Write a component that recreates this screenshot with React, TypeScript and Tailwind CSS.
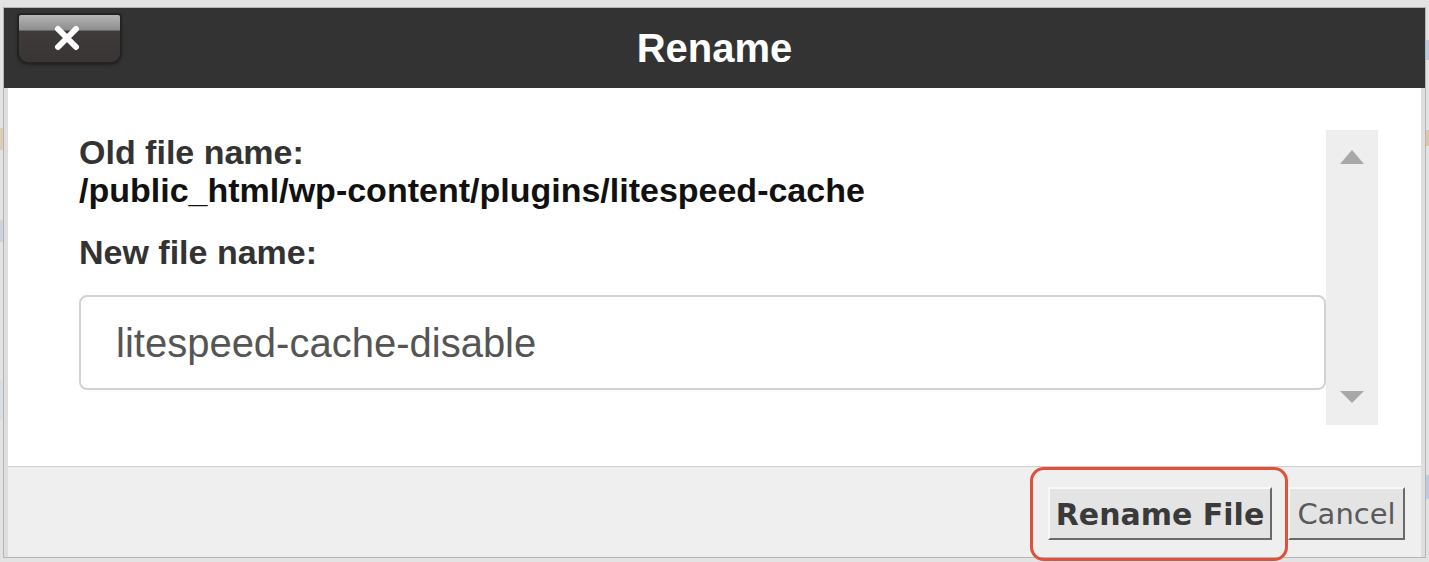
import React from "react";

export default function App() {
  return (
    <div className="relative w-[1429px] h-[562px] overflow-hidden bg-[#e3e3e3] pt-[7px] pl-[3px]" style={{ fontFamily: '"Liberation Sans", Arial, sans-serif' }}>
      {/* faint fragments of page underneath */}
      <div className="absolute left-0 top-[128px] w-[3px] h-[22px] bg-[#d9cdb8]" />
      <div className="absolute left-0 top-[220px] w-[3px] h-[22px] bg-[#ccd3df]" />
      <div className="absolute left-0 top-[380px] w-[3px] h-[40px] bg-[#d6dee8]" />
      <div className="absolute right-0 top-[40px] w-[3px] h-[20px] bg-[#bccbe0]" />
      <div className="absolute right-0 top-[130px] w-[3px] h-[16px] bg-[#dcc8a6]" />
      <div className="absolute right-0 top-[475px] w-[3px] h-[24px] bg-[#bccbe0]" />

      <div className="w-[1423px] h-[551px] flex flex-col border border-[#b5b5b5] bg-[#dedede]">
        {/* header */}
        <div className="relative h-[80px] shrink-0 bg-[#333333] flex items-center justify-center">
          <button className="absolute left-[15px] top-[7px] w-[101px] h-[47px] rounded-b-[9px] rounded-t-[2px] bg-[linear-gradient(to_bottom,#b4b4b4_0%,#8e8e8e_32%,#3f3b3b_34%,#393535_100%)] shadow-[0_0_0_2px_#232323,0_2px_4px_rgba(0,0,0,0.6)] flex items-center justify-center">
            <svg width="26" height="26" viewBox="0 0 26 26" className="mr-[6px] mt-[-2px]">
              <path d="M4 4 L22 22 M22 4 L4 22" stroke="#ffffff" strokeWidth="6" strokeLinecap="round" />
            </svg>
          </button>
          <span className="text-white text-[40px] font-bold leading-none">Rename</span>
        </div>

        {/* body */}
        <div className="h-[378px] shrink-0 mx-[4px] bg-white flex pt-[42px] pr-[43px] pl-[71px]">
          <div className="flex-1 flex flex-col pt-[3px]">
            <div className="text-[34px] leading-[38px] font-bold text-[#333]">Old file name:</div>
            <div className="text-[34px] leading-[38px] font-bold text-[#111]">/public_html/wp-content/plugins/litespeed-cache</div>
            <div className="mt-[24px] text-[34px] leading-[38px] font-bold text-[#333]">New file name:</div>
            <div className="mt-[24px] h-[95px] w-[1247px] rounded-[8px] border-[2px] border-[#d2d2d2] flex items-center pl-[35px]">
              <span className="text-[40px] text-[#555] leading-none">litespeed-cache-disable</span>
            </div>
          </div>
          <div className="w-[52px] h-[295px] bg-[#eeeeee] flex flex-col items-center justify-between pt-[20px] pb-[22px]">
            <svg width="24" height="14" viewBox="0 0 24 14"><polygon points="12,0 24,14 0,14" fill="#a8a8a8" /></svg>
            <svg width="24" height="12" viewBox="0 0 24 12"><polygon points="0,0 24,0 12,12" fill="#a8a8a8" /></svg>
          </div>
        </div>

        {/* footer */}
        <div className="flex-1 mx-[4px] bg-[#efefef] border-t border-[#cfcfcf] flex justify-end items-start pt-[20px] pr-[16px] gap-[16px]">
          <button className="w-[224px] h-[53px] bg-[#e4e4e4] border-[2px] border-t-[#f8f8f8] border-l-[#f8f8f8] border-b-[#6a6a6a] border-r-[#6a6a6a] flex items-center justify-center pt-[2px]" style={{ fontFamily: '"DejaVu Sans", sans-serif' }}>
            <span className="text-[30px] font-bold text-[#3a3a3a] leading-none">Rename File</span>
          </button>
          <button className="w-[117px] h-[53px] bg-[#e4e4e4] border-[2px] border-t-[#f8f8f8] border-l-[#f8f8f8] border-b-[#6a6a6a] border-r-[#6a6a6a] flex items-center justify-center pt-[2px]" style={{ fontFamily: '"DejaVu Sans", sans-serif' }}>
            <span className="text-[29px] text-[#5a5a5a] leading-none">Cancel</span>
          </button>
        </div>
      </div>

      {/* red annotation */}
      <div className="absolute left-[1030px] top-[467px] w-[258px] h-[94px] rounded-[14px] border-[3px] border-[#e0503a]" />
    </div>
  );
}
